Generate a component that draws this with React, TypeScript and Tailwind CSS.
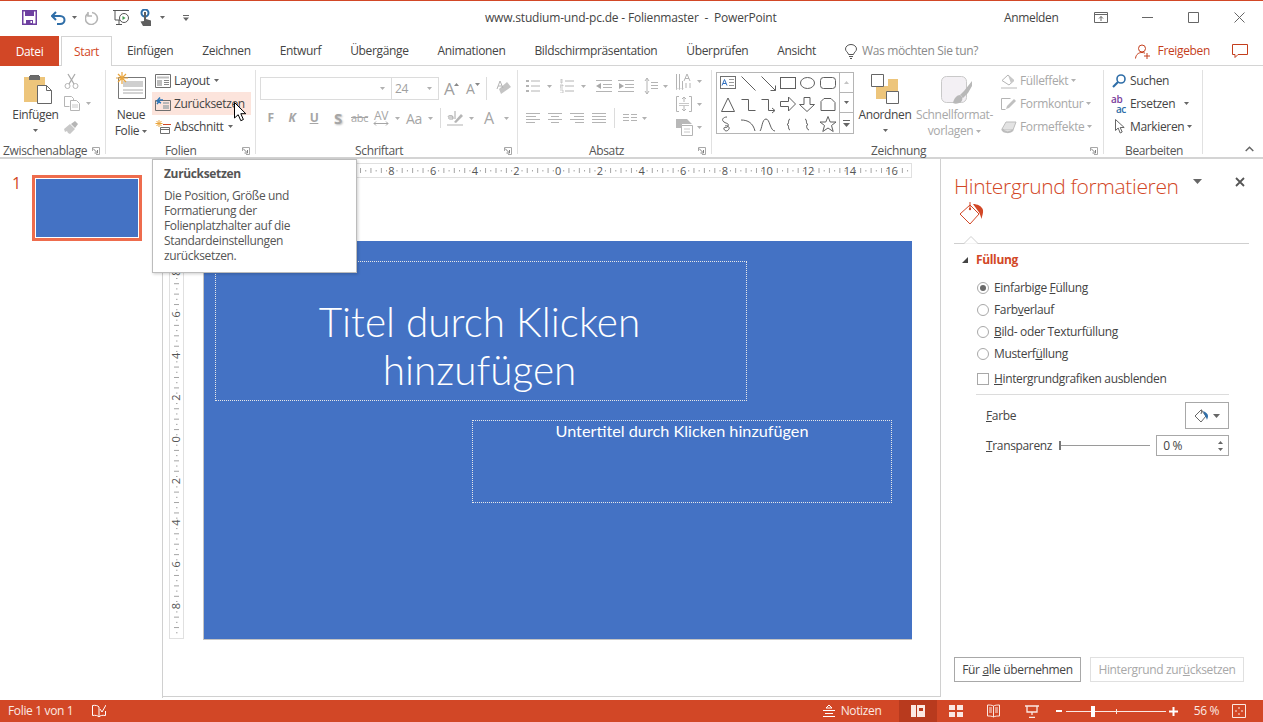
import type { ReactNode } from "react";

const DIS = "#b1b1b1";

function Caret({ c = "#666666", className = "" }: { c?: string; className?: string }) {
  return (
    <svg width="5" height="3" viewBox="0 0 5 3" className={"shrink-0 " + className}>
      <path d="M0 0h5L2.5 3z" fill={c} />
    </svg>
  );
}

function Launcher() {
  return (
    <svg width="8" height="8" viewBox="0 0 8 8" fill="none" className="shrink-0">
      <path d="M.5 4V.5H7.5V7.5H4" stroke="#a8a8a8" />
      <path d="M1 1.5 4.5 5M5.5 3v3h-3" stroke="#808080" />
    </svg>
  );
}

function GroupLabel({ pl, children }: { pl: string; children: ReactNode }) {
  return (
    <div className="flex h-[14px] items-center pr-[5px] text-[12px] text-[#555555]">
      <span className={pl}>{children}</span>
      <span className="ml-auto">
        <Launcher />
      </span>
    </div>
  );
}

function Lines({ w, ys, c = "#b4b4b4", inset = [] }: { w: number; ys: number[]; c?: string; inset?: number[][] }) {
  return (
    <svg width={w} height="14" viewBox={`0 0 ${w} 14`} className="shrink-0">
      {ys.map((y, i) => {
        const [a, b] = inset[i] ?? [0, w];
        return <rect key={y} x={a} y={y} width={b - a} height="1" fill={c} />;
      })}
    </svg>
  );
}

function ShapeGallery() {
  return (
    <svg width="122" height="61" viewBox="0 0 122 61" fill="none" stroke="#5f5f5f" className="shrink-0">
      <rect x="3.5" y="3.5" width="15" height="12" stroke="#707070" />
      <path d="m5 12.500 2.500-6 2.500 6M6 10.500h3" stroke="#2f6fc0" />
      <path d="M12 6.500h5M12 9.500h5M12 12.500h5" stroke="#999999" />
      <path d="M24.5 3.5 38.5 17.5" />
      <path d="M44.5 3.5 58.5 17.5M58.5 12.5v5h-5" />
      <rect x="63.5" y="4.5" width="15" height="11" />
      <ellipse cx="90.5" cy="10" rx="7" ry="5.5" />
      <rect x="103.5" y="4.5" width="15" height="11" rx="3" />
      <path d="M4.5 38.5 11 25l6.5 13.5z" />
      <path d="M24.5 26.5h7v11h7" />
      <path d="M44.5 26.5h7v11h6M55 35l3 2.500-3 2.500" />
      <path d="M63.500 28.500h8v-4.500l7 7-7 7v-4.500h-8z" />
      <path d="M87 24.500h6v7h4.500l-7.500 7-7.500-7H87z" />
      <path d="M107 25.500h7l4 4v8h-14v-9z" />
      <path d="M10 44c-4 0-6 3-3 5s5 1 4 4-5 0-4 3 4 2 5 0-2-4-4-3" />
      <path d="M24 47c7 0 12 3 14 11" />
      <path d="M43 58c2-2 2-12 6-12s4 12 9 12" />
      <path d="M73 46c-2 0-1 4-2 5l-1 .5 1 .5c1 1 0 5 2 5" />
      <path d="M88 46c2 0 1 4 2 5l1 .5-1 .500c-1 1 0 5 2 5" />
      <path d="m111 43.500 2.200 5.500h5.800l-4.500 3.500 1.700 6-5.200-3.500-5.200 3.500 1.700-6-4.500-3.500h5.800z" />
    </svg>
  );
}

function HRuler() {
  const marks = Array.from({ length: 143 }, (_, i) => i - 71);
  return (
    <svg width="742" height="15" viewBox="0 0 742 15" className="block shrink-0">
      <rect x=".5" y=".5" width="741" height="14" fill="#ffffff" stroke="#e0e0e0" />
      {marks.map((m) => {
        const x = 388 + m * 5.21;
        if (m % 8 === 0) {
          // labels further left sit behind the tooltip
          if (m < -32) return null;
          return (
            <text key={m} x={x} y="11.500" textAnchor="middle" fontSize="11" fill="#555555" fontFamily="Open Sans, sans-serif">
              {Math.abs(m / 4)}
            </text>
          );
        }
        return m % 2 === 0 ? (
          <rect key={m} x={x} y="5" width="1" height="5" fill="#a5a5a5" />
        ) : (
          <rect key={m} x={x} y="7" width="1" height="1.500" fill="#a5a5a5" />
        );
      })}
    </svg>
  );
}

function VRuler() {
  const marks = Array.from({ length: 76 }, (_, i) => i - 38);
  return (
    <svg width="15" height="398" viewBox="0 0 15 398" className="-ml-[1px] block shrink-0">
      <rect x=".5" y=".5" width="14" height="397" fill="#ffffff" stroke="#e0e0e0" />
      {marks.map((m) => {
        const y = 198.500 + m * 5.21;
        if (m % 8 === 0) {
          return (
            <text
              key={m}
              x="0"
              y="0"
              transform={`translate(11 ${y}) rotate(-90)`}
              textAnchor="middle"
              fontSize="11"
              fill="#555555"
              fontFamily="Open Sans, sans-serif"
            >
              {Math.abs(m / 4)}
            </text>
          );
        }
        return m % 2 === 0 ? (
          <rect key={m} x="5" y={y} width="5" height="1" fill="#a5a5a5" />
        ) : (
          <rect key={m} x="7" y={y} width="1.500" height="1" fill="#a5a5a5" />
        );
      })}
    </svg>
  );
}

function TitleBar() {
  return (
    <div className="flex h-[35px] items-center pb-[2px] text-[12px] text-[#444444]">
      <div className="flex w-[400px] items-center pl-[22px]">
        <svg width="15" height="15" viewBox="0 0 15 15" fill="none">
          <path d="M.75.75h13.500v13.500H.75z" stroke="#6d3fa0" strokeWidth="1.500" />
          <path d="M3 1h9v5H3zM4 10h7v4H4z" fill="#6d3fa0" />
          <path d="M8.500 11h1.500v2H8.500z" fill="#ffffff" />
        </svg>
        <svg width="16" height="14" viewBox="0 0 16 14" fill="none" className="ml-[14px]">
          <path d="M5 1 1 5l4 4" stroke="#2f6ea8" strokeWidth="2" />
          <path d="M2 5h7c6 0 6 8 0 8H6" stroke="#2f6ea8" strokeWidth="2" />
        </svg>
        <Caret className="ml-[5px]" />
        <svg width="14" height="14" viewBox="0 0 14 14" fill="none" className="ml-[8px]">
          <path d="M3 2.500a6 6 0 1 0 4-1M3 1v4h4" stroke="#b5b5b5" strokeWidth="1.600" />
        </svg>
        <svg width="17" height="17" viewBox="0 0 17 17" fill="none" className="ml-[14px]">
          <path d="M0 1.500h16M2 2v9h5" stroke="#555555" />
          <path d="M6 11v4M3 15.500h6" stroke="#555555" />
          <circle cx="11" cy="9" r="4.500" stroke="#555555" />
          <path d="M9.500 7v4l3-2z" fill="#3f9c4f" />
        </svg>
        <svg width="13" height="18" viewBox="0 0 13 18" fill="none" className="ml-[10px]">
          <circle cx="5" cy="4" r="3.500" stroke="#2f6ea8" strokeWidth="2" />
          <path d="M4 3h2v7l5 1.500V17H3L.5 12.500 4 12z" fill="#5f5f5f" />
        </svg>
        <Caret className="ml-[7px]" />
        <svg width="6" height="6" viewBox="0 0 6 6" className="ml-[18px]">
          <path d="M0 0h6v1H0zM0 2.500h6L3 6z" fill="#666666" />
        </svg>
      </div>
      <div className="w-[604px] whitespace-pre pl-[85px] tracking-[-0.19px] text-[#444444]">www.studium-und-pc.de - Folienmaster  -  PowerPoint</div>
      <div className="flex flex-1 items-center">
        <span>Anmelden</span>
        <svg width="14" height="11" viewBox="0 0 14 11" fill="none" className="ml-[36px]">
          <path d="M.5.500h13v10H.5zM.5 2.500h13M7 9V4.500M5 6.500l2-2 2 2" stroke="#666666" />
        </svg>
        <svg width="11" height="1" viewBox="0 0 11 1" className="ml-[34px]">
          <path d="M0 0h11v1H0z" fill="#666666" />
        </svg>
        <svg width="11" height="11" viewBox="0 0 11 11" fill="none" className="ml-[35px]">
          <path d="M.5.500h10v10H.5z" stroke="#666666" />
        </svg>
        <svg width="11" height="11" viewBox="0 0 11 11" fill="none" className="ml-[35px]">
          <path d="m.5.500 10 10M10.500.500l-10 10" stroke="#666666" />
        </svg>
      </div>
    </div>
  );
}

function Tabs() {
  const tabs = ["Einfügen", "Zeichnen", "Entwurf", "Übergänge", "Animationen", "Bildschirmpräsentation", "Überprüfen", "Ansicht"];
  return (
    <div className="flex h-[30px] items-stretch border-b border-[#d4d4d4] text-[12px] text-[#444444]">
      <div className="mb-[-1px] flex w-[59px] items-center justify-center bg-[#d24726] pt-[1px] text-white">Datei</div>
      <div className="relative ml-[2px] mb-[-1px] flex w-[51px] items-center justify-center border-x border-t border-[#d4d4d4] bg-white pt-[1px] text-[#d24726]">Start</div>
      <div className="flex items-center gap-[29px] pl-[15px] pt-[1px]">
        {tabs.map((t) => (
          <span key={t}>{t}</span>
        ))}
      </div>
      <div className="ml-[29px] flex items-center pt-[1px]">
        <svg width="12" height="15" viewBox="0 0 12 15" fill="none">
          <path d="M3.500 10.500C3 8 .5 7.500.5 5a5.500 4.500 0 0 1 11 0c0 2.500-2.500 3-3 5.500zM4 12.500h4M5 14.500h2" stroke="#555555" />
        </svg>
        <span className="ml-[5px] text-[#8a8a8a]">Was möchten Sie tun?</span>
      </div>
      <div className="ml-auto flex items-center pr-[15px] pt-[1px] text-[#c43e1c]">
        <svg width="16" height="15" viewBox="0 0 16 15" fill="none">
          <circle cx="7" cy="4.500" r="3.500" stroke="#c43e1c" />
          <path d="M.5 14.500C1 10 4 8.500 7 8.500c1 0 2 .2 3 .7M12 9v6M9 12h6" stroke="#c43e1c" />
        </svg>
        <span className="ml-[7px]">Freigeben</span>
        <svg width="16" height="14" viewBox="0 0 16 14" fill="none" className="ml-[22px]">
          <path d="M.5.500h15v10H6l-3 3v-3H.5z" stroke="#c43e1c" />
        </svg>
      </div>
    </div>
  );
}

function ClipboardGroup() {
  return (
    <div className="h-[84px] w-[106px] shrink-0 border-r border-[#e1e1e1]">
      <div className="flex h-[70px]">
        <div className="flex w-[62px] flex-col items-center pl-[9px]">
          <svg width="30" height="30" viewBox="0 0 30 30" fill="none" className="mt-[4px] ml-[4px]">
            <path d="M1 3h21v25H1z" fill="#edc57b" />
            <path d="M7 3h9V1h-9z" fill="#666666" />
            <path d="M6 2h11v4H6z" fill="#6b6b6b" />
            <path d="M14.500 11.500h9l5 5v13h-14z" fill="#ffffff" stroke="#666666" />
            <path d="M23.500 11.500v5h5" stroke="#666666" />
          </svg>
          <span className="mt-[3px] text-[12px] leading-[16px] text-[#444444]">Einfügen</span>
          <Caret className="mt-[6px]" />
        </div>
        <div className="ml-[2px] -mt-[1px] flex flex-col">
          <div className="flex h-[23px] items-center">
            <svg width="15" height="16" viewBox="0 0 15 16" fill="none">
              <path d="m4 1 6 10M11 1 5 11" stroke="#ababab" strokeWidth="1.300" />
              <circle cx="3.500" cy="13" r="2.500" stroke="#b5b5b5" />
              <circle cx="11.500" cy="13" r="2.500" stroke="#b5b5b5" />
            </svg>
          </div>
          <div className="flex h-[23px] items-center">
            <svg width="16" height="15" viewBox="0 0 16 15" fill="none">
              <path d="M.5.500h7l2 2v2M.5.500v10h5M6.500 4.500h6l3 3v7h-9z" stroke="#b5b5b5" />
              <path d="M8 9h6M8 11h6" stroke="#c8c8c8" />
            </svg>
            <Caret c={DIS} className="ml-[6px]" />
          </div>
          <div className="flex h-[23px] items-center">
            <svg width="15" height="14" viewBox="0 0 15 14" fill="none">
              <path d="M0 9 6 4l5 5-5 5-2-1-1-2-2 1z" fill="#c8c8c8" />
              <path d="m7 4 4-3 3 3-3 4z" fill="#b5b5b5" />
            </svg>
          </div>
        </div>
      </div>
      <div className="h-[4px]" />
      <GroupLabel pl="pl-[3px]">Zwischenablage</GroupLabel>
    </div>
  );
}

function SlidesGroup() {
  return (
    <div className="h-[84px] w-[150px] shrink-0 border-r border-[#e1e1e1]">
      <div className="flex h-[70px]">
        <div className="flex w-[46px] flex-col items-center pl-[4px] text-[12px] leading-[16px] text-[#444444]">
          <svg width="31" height="28" viewBox="0 0 31 28" fill="none" className="mt-[2px]">
            <path d="M2.500 5.500h27v21h-27z" fill="#ffffff" stroke="#777777" />
            <path d="M7 9h20v6H7z" fill="#cfcfcf" />
            <path d="M7 18h20M7 21h20" stroke="#a8a8a8" />
            <path d="M6 0v12M0 6h12M2 2l8 8M10 2l-8 8" stroke="#eaa53c" strokeWidth="1.200" />
          </svg>
          <span className="mt-[7px]">Neue</span>
          <span className="flex items-center gap-[3px]">
            Folie
            <Caret />
          </span>
        </div>
        <div className="-mt-[1px] flex flex-col text-[12px] text-[#444444]">
          <div className="flex h-[23px] w-[99px] items-center pl-[3px]">
            <svg width="16" height="14" viewBox="0 0 16 14" fill="none">
              <path d="M.5.500h15v13H.5z" stroke="#6f6f6f" />
              <path d="M2 2.500h12v2H2zM2 6h5v6H2z" fill="#bdbdbd" />
              <path d="M9 6.500h5M9 8.500h5M9 10.500h5" stroke="#888888" />
            </svg>
            <span className="ml-[3px]">Layout</span>
            <Caret className="ml-[4px]" />
          </div>
          <div className="flex h-[23px] w-[99px] items-center bg-[#fce4dc] pl-[3px]">
            <svg width="16" height="14" viewBox="0 0 16 14" fill="none">
              <path d="M.5 3.500h15v10H.5z" stroke="#6f6f6f" />
              <path d="M8 5h6v2H8zM8 8h6v4H8z" fill="#b8b8b8" />
              <path d="M2 7 5 3l3 0M5 .5 2 4l4 2" stroke="#3077b8" strokeWidth="1.400" />
            </svg>
            <span className="ml-[3px]">Zurücksetzen</span>
          </div>
          <div className="flex h-[23px] w-[99px] items-center pl-[3px]">
            <svg width="16" height="14" viewBox="0 0 16 14" fill="none">
              <path d="M4 0v7M.5 3.500h7M1.500 1l5 5M6.500 1l-5 5" stroke="#eaa53c" />
              <path d="M8 4.500h8" stroke="#d24726" />
              <path d="M5.500 7.500h9v6h-9z" stroke="#6f6f6f" />
              <path d="M5.500 9.500h9" stroke="#6f6f6f" />
            </svg>
            <span className="ml-[3px]">Abschnitt</span>
            <Caret className="ml-[4px]" />
          </div>
        </div>
      </div>
      <div className="h-[4px]" />
      <GroupLabel pl="pl-[59px]">Folien</GroupLabel>
    </div>
  );
}

function Sep({ h }: { h: string }) {
  return <div className={"w-px shrink-0 bg-[#dcdcdc] " + h} />;
}

function FontGroup() {
  const b = "text-center text-[12px] font-bold text-[#a6a6a6] ";
  return (
    <div className="h-[84px] w-[262px] shrink-0 border-r border-[#e1e1e1]">
      <div className="h-[70px] pl-[4px]">
        <div className="flex h-[38px] items-start pt-[7px]">
          <div className="flex h-[23px] w-[132px] items-center justify-end border border-[#dcdcdc] pr-[6px]">
            <Caret c={DIS} />
          </div>
          <div className="flex h-[23px] w-[47px] items-center justify-between border border-l-0 border-[#dcdcdc] pl-[3px] pr-[6px] text-[12px] text-[#a0a0a0]">
            24
            <Caret c={DIS} />
          </div>
          <div className="ml-[5px] flex h-[23px] w-[21px] items-center text-[17px] text-[#a0a0a0]">
            A
            <svg width="5" height="3" viewBox="0 0 5 3" className="mb-[9px]">
              <path d="M0 3h5L2.500 0z" fill="#888888" />
            </svg>
          </div>
          <div className="ml-[1px] flex h-[23px] w-[20px] items-center text-[14px] text-[#a0a0a0]">
            A
            <svg width="5" height="3" viewBox="0 0 5 3" className="mb-[9px]">
              <path d="M0 0h5L2.500 3z" fill="#888888" />
            </svg>
          </div>
          <Sep h="h-[23px]" />
          <svg width="15" height="16" viewBox="0 0 15 16" fill="none" className="ml-[9px] mt-[3px]">
            <path d="m5 14 10-7-4-5L3 9z" fill="#c4c4c4" />
            <path d="M1 9 4 1l3 7M2 6h4" stroke="#b4b4b4" />
          </svg>
        </div>
        <div className="flex h-[20px] items-center">
          <span className={b + "w-[21px]"}>F</span>
          <span className={b + "w-[22px] italic"}>K</span>
          <span className={b + "w-[22px] underline"}>U</span>
          <span className={b + "w-[26px] text-[15px] [text-shadow:1px_1px_2px_#bbbbbb]"}>S</span>
          <span className="w-[16px] text-center text-[11px] text-[#a6a6a6] line-through">abc</span>
          <span className="flex w-[28px] flex-col items-center text-[12px] leading-[11px] text-[#a6a6a6]">
            AV
            <svg width="16" height="5" viewBox="0 0 16 5" fill="none">
              <path d="M1 2.500h14M3 .5l-2 2 2 2M13 .5l2 2-2 2" stroke="#a6a6a6" />
            </svg>
          </span>
          <Caret c={DIS} />
          <span className="w-[28px] text-center text-[14px] text-[#a6a6a6]">Aa</span>
          <Caret c={DIS} />
          <div className="ml-[7px]">
            <Sep h="h-[20px]" />
          </div>
          <span className="flex w-[28px] flex-col items-center">
            <svg width="16" height="16" viewBox="0 0 16 16" fill="none">
              <path d="M0 14h16v2H0z" fill="#d8d8d8" />
              <path d="m7 12 7-8 2 2-7 7z" fill="#b5b5b5" />
              <path d="M1 7c0-2 5-2 5 0v2H3c-2 0-2-2 0-2h3M8 1v8" stroke="#a6a6a6" />
            </svg>
          </span>
          <Caret c={DIS} />
          <span className="w-[30px] text-center text-[16px] text-[#a6a6a6]">A</span>
          <Caret c={DIS} />
        </div>
      </div>
      <div className="h-[4px]" />
      <GroupLabel pl="pl-[99px]">Schriftart</GroupLabel>
    </div>
  );
}

function ParagraphGroup() {
  const left = [[0, 14], [0, 10], [0, 14], [0, 9]];
  const center = [[0, 14], [3, 11], [0, 14], [3, 11]];
  const right = [[0, 14], [4, 14], [0, 14], [5, 14]];
  const full = [[0, 14], [0, 14], [0, 14], [0, 14]];
  const ys = [2, 5, 8, 11];
  return (
    <div className="h-[84px] w-[194px] shrink-0 border-r border-[#e1e1e1]">
      <div className="flex h-[70px]">
        <div className="w-[158px] pl-[8px]">
          <div className="mt-[6px] flex h-[20px] items-center">
            <svg width="14" height="14" viewBox="0 0 14 14" fill="none" className="shrink-0">
              <path d="M0 1h3v2H0zM0 6h3v2H0zM0 11h3v2H0z" fill="#b4b4b4" />
              <path d="M5 2h9M5 7h9M5 12h9" stroke="#b4b4b4" />
            </svg>
            <Caret c={DIS} className="ml-[7px]" />
            <svg width="14" height="14" viewBox="0 0 14 14" fill="none" className="ml-[8px] shrink-0">
              <path d="M1 0h1v4H1zM0 6h3v1H0v2h3M0 11h3v3H0" stroke="#b4b4b4" strokeWidth=".7" />
              <path d="M5 2h9M5 7h9M5 12h9" stroke="#b4b4b4" />
            </svg>
            <Caret c={DIS} className="ml-[7px]" />
            <svg width="16" height="14" viewBox="0 0 16 14" fill="none" className="ml-[10px] shrink-0">
              <path d="M0 1.500h16M7 5.500h9M7 8.500h9M0 12.500h16" stroke="#b4b4b4" />
              <path d="M5 4v6L0 7z" fill="#a8a8a8" />
            </svg>
            <svg width="16" height="14" viewBox="0 0 16 14" fill="none" className="ml-[6px] shrink-0">
              <path d="M0 1.500h16M7 5.500h9M7 8.500h9M0 12.500h16" stroke="#b4b4b4" />
              <path d="M1 4v6l5-3z" fill="#a8a8a8" />
            </svg>
            <svg width="14" height="18" viewBox="0 0 14 18" fill="none" className="ml-[10px] shrink-0">
              <path d="M3 1v16M1 4l2-3 2 3M1 14l2 3 2-3" stroke="#b4b4b4" />
              <path d="M7 5.500h7M7 8.500h7M7 11.500h7" stroke="#b4b4b4" />
            </svg>
            <Caret c={DIS} className="ml-[5px]" />
          </div>
          <div className="mt-[12px] flex h-[20px] items-center">
            <Lines w={14} ys={ys} inset={left} />
            <div className="ml-[8px]">
              <Lines w={14} ys={ys} inset={center} />
            </div>
            <div className="ml-[8px]">
              <Lines w={14} ys={ys} inset={right} />
            </div>
            <div className="ml-[8px]">
              <Lines w={14} ys={ys} inset={full} />
            </div>
            <div className="ml-[8px]">
              <Sep h="h-[20px]" />
            </div>
            <svg width="14" height="14" viewBox="0 0 14 14" fill="none" className="ml-[8px] shrink-0">
              <path d="M0 3.500h6M0 6.500h6M0 9.500h6M8 3.500h6M8 6.500h6M8 9.500h6" stroke="#b4b4b4" />
            </svg>
            <Caret c={DIS} className="ml-[5px]" />
          </div>
        </div>
        <div className="-mt-[1px] flex flex-col">
          <div className="flex h-[23px] items-center pt-[1px]">
            <svg width="16" height="17" viewBox="0 0 16 17" fill="none">
              <path d="M.5 1v14M3.500 1v14M6.500 8v7M1 15l-.5 1.500L0 15M4 15l-.5 1.500L3 15M7 15l-.5 1.500L6 15" stroke="#b4b4b4" />
              <path d="M8 8l3-7 3 7M9 5.500h4" stroke="#b4b4b4" />
              <path d="M10 10v5M14 10v5" stroke="#b4b4b4" />
            </svg>
            <Caret c={DIS} className="ml-[5px]" />
          </div>
          <div className="flex h-[23px] items-center pt-[1px]">
            <svg width="16" height="16" viewBox="0 0 16 16" fill="none">
              <path d="M3 .5H.5v15H3M13 .5h2.500v15H13M8 1v5M6 3l2-2 2 2M8 15v-5M6 13l2 2 2-2" stroke="#b4b4b4" />
              <path d="M3 7.500h10M3 9.500h10" stroke="#c8c8c8" />
            </svg>
            <Caret c={DIS} className="ml-[5px]" />
          </div>
          <div className="flex h-[23px] items-center pt-[2px]">
            <svg width="17" height="17" viewBox="0 0 17 17" fill="none">
              <path d="M0 0h11l5 5H6v4H0z" fill="#b8b8b8" />
              <path d="M5.500 6.500h11v10h-11z" fill="#ffffff" stroke="#b4b4b4" />
              <path d="M8 10h6M8 13h6" stroke="#c8c8c8" />
            </svg>
            <Caret c={DIS} className="ml-[4px]" />
          </div>
        </div>
      </div>
      <div className="h-[4px]" />
      <div className="flex h-[14px] items-center pr-[5px] text-[12px] text-[#555555]">
        <span className="pl-[71px]">Absatz</span>
        <span className="ml-auto">
          <Launcher />
        </span>
      </div>
    </div>
  );
}

function ScrollCell({ children, last = false }: { children: ReactNode; last?: boolean }) {
  return <div className={"flex h-[20px] items-center justify-center border-[#b5b5b5] " + (last ? "" : "border-b")}>{children}</div>;
}

function DrawingGroup() {
  const row = "flex h-[23px] items-center";
  return (
    <div className="h-[84px] w-[392px] shrink-0 border-r border-[#e1e1e1]">
      <div className="flex h-[70px] text-[12px]">
        <div className="ml-[4px] mt-[2px] flex h-[62px] border border-[#b5b5b5]">
          <ShapeGallery />
          <div className="flex w-[14px] flex-col border-l border-[#b5b5b5]">
            <ScrollCell>
              <svg width="5" height="3" viewBox="0 0 5 3">
                <path d="M0 3h5L2.500 0z" fill="#c4c4c4" />
              </svg>
            </ScrollCell>
            <ScrollCell>
              <Caret />
            </ScrollCell>
            <ScrollCell last>
              <svg width="7" height="7" viewBox="0 0 7 7">
                <path d="M0 0h7v1H0zM0 3h7L3.500 7z" fill="#666666" />
              </svg>
            </ScrollCell>
          </div>
        </div>
        <div className="ml-[4px] flex w-[54px] flex-col items-center text-[#444444]">
          <svg width="28" height="30" viewBox="0 0 28 30" fill="none" className="mt-[4px]">
            <path d="M5 12h12V5h10v12H17v8H5z" fill="#edc57b" />
            <path d="M.5.500h12v12H.5z" fill="#ffffff" stroke="#666666" />
            <path d="M15.500 17.500h12v12h-12z" fill="#ffffff" stroke="#666666" />
          </svg>
          <span className="mt-[3px] leading-[16px]">Anordnen</span>
          <Caret className="mt-[6px]" />
        </div>
        <div className="ml-[2px] flex w-[81px] flex-col items-center leading-[16px] text-[#a8a8a8]">
          <svg width="31" height="30" viewBox="0 0 31 30" fill="none" className="ml-[3px] mt-[5px]">
            <rect x=".5" y="1.500" width="25" height="26" rx="5" fill="#f3f0f4" stroke="#c9c9c9" />
            <path d="m31 6-8 10-4 4 3 3 5-5 4-7zM12 28c1-5 4-8 7-8 3 1 3 5 1 7-3 2-6 2-8 1z" fill="#b8b8b8" />
          </svg>
          <span className="mt-[2px] whitespace-nowrap">Schnellformat-</span>
          <span className="flex items-center gap-[3px]">
            vorlagen
            <Caret c={DIS} />
          </span>
        </div>
        <div className="ml-[6px] -mt-[1px] flex flex-col text-[#a8a8a8]">
          <div className={row}>
            <svg width="16" height="16" viewBox="0 0 16 16" fill="none">
              <path d="M1 7.500 7 2l6 5.500L8 12z" stroke="#b4b4b4" />
              <path d="m7 2 6 5.500-3 3z" fill="#c8c8c8" />
              <path d="M0 14h16v2H0z" fill="#dcdcdc" />
            </svg>
            <span className="ml-[3px]">Fülleffekt</span>
            <Caret c={DIS} className="ml-[3px]" />
          </div>
          <div className={row}>
            <svg width="16" height="14" viewBox="0 0 16 14" fill="none">
              <path d="M.5 1.500h9M.5 1.500v11h4" stroke="#b4b4b4" />
              <path d="m5 12 1-3 7-7 2 2-7 7z" fill="#c0c0c0" />
            </svg>
            <span className="ml-[3px]">Formkontur</span>
            <Caret c={DIS} className="ml-[3px]" />
          </div>
          <div className={row}>
            <svg width="16" height="14" viewBox="0 0 16 14" fill="none">
              <path d="M1 9 5 2h10l-3 8H3z" fill="#e3e3e3" stroke="#bdbdbd" />
              <path d="M1 9c2 4 8 4 11 1" stroke="#bdbdbd" strokeWidth="2" />
            </svg>
            <span className="ml-[3px]">Formeffekte</span>
            <Caret c={DIS} className="ml-[3px]" />
          </div>
        </div>
      </div>
      <div className="h-[4px]" />
      <GroupLabel pl="pl-[159px]">Zeichnung</GroupLabel>
    </div>
  );
}

function EditGroup() {
  const row = "flex h-[23px] items-center";
  return (
    <div className="h-[84px] w-[99px] shrink-0 border-r border-[#e1e1e1]">
      <div className="-mt-[1px] h-[71px] text-[12px] text-[#444444]">
        <div className={row + " pl-[8px]"}>
          <svg width="14" height="14" viewBox="0 0 14 14" fill="none">
            <circle cx="9" cy="5" r="4" stroke="#2f6ea8" strokeWidth="1.600" />
            <path d="m6 8-5 5" stroke="#2f6ea8" strokeWidth="2.200" />
          </svg>
          <span className="ml-[4px]">Suchen</span>
        </div>
        <div className={row + " pl-[7px]"}>
          <span className="flex w-[15px] flex-col text-[10px] font-semibold leading-[10px]">
            <span className="text-[#7a3e9d]">ab</span>
            <span className="text-right text-[#2f6ea8]">ac</span>
          </span>
          <span className="ml-[4px]">Ersetzen</span>
          <Caret className="ml-[9px]" />
        </div>
        <div className={row + " pl-[11px]"}>
          <svg width="11" height="15" viewBox="0 0 11 15" fill="none">
            <path d="M.5.500v11l2.700-2.500 2 5 2-1-2-4.500h4z" fill="#ffffff" stroke="#666666" />
          </svg>
          <span className="ml-[4px]">Markieren</span>
          <Caret className="ml-[3px]" />
        </div>
      </div>
      <div className="h-[4px]" />
      <div className="flex h-[14px] items-center text-[12px] text-[#555555]">
        <span className="pl-[21px]">Bearbeiten</span>
      </div>
    </div>
  );
}

function Ribbon() {
  return (
    <div className="flex h-[93px] shrink-0 border-b-2 border-[#d4d4d4] pt-[4px]">
      <ClipboardGroup />
      <SlidesGroup />
      <FontGroup />
      <ParagraphGroup />
      <DrawingGroup />
      <EditGroup />
      <div className="flex flex-1 items-end justify-end pb-[3px] pr-[9px]">
        <svg width="9" height="6" viewBox="0 0 9 6" fill="none" className="mb-[2px]">
          <path d="m.7 5 3.800-3.800L8.300 5" stroke="#666666" strokeWidth="1.500" />
        </svg>
      </div>
    </div>
  );
}

function Radio({ on = false, children }: { on?: boolean; children: ReactNode }) {
  return (
    <div className="flex h-[22px] items-center">
      <span className="flex h-[12px] w-[12px] items-center justify-center rounded-full border border-[#a8a8a8]">
        {on && <span className="h-[6px] w-[6px] rounded-full bg-[#6a6a6a]" />}
      </span>
      <span className="ml-[5px]">{children}</span>
    </div>
  );
}

function FormatPane() {
  return (
    <aside className="flex h-full w-[322px] shrink-0 flex-col pl-[13px] pr-[14px] text-[12px] text-[#444444]">
      <div className="flex h-[42px] items-end">
        <span className="text-[21px] font-light leading-[30px] text-[#d24726]">Hintergrund formatieren</span>
        <svg width="9" height="5" viewBox="0 0 9 5" className="mb-[17px] ml-[14px]">
          <path d="M0 0h9L4.500 5z" fill="#666666" />
        </svg>
        <svg width="10" height="10" viewBox="0 0 10 10" fill="none" className="mb-[14px] ml-[33px]">
          <path d="m1 1 8 8M9 1 1 9" stroke="#555555" strokeWidth="1.800" />
        </svg>
      </div>
      <svg width="27" height="23" viewBox="0 0 27 23" fill="none" className="mt-[1px] ml-[5px] shrink-0">
        <path d="M1 12 11 3l9 9-9 10z" stroke="#d24726" />
        <path d="M11 0v6" stroke="#d24726" />
        <circle cx="11" cy="7" r="1.200" fill="#d24726" />
        <path d="M14 2c4 0 9 2 10 6 .5 3-1 6-1.500 9-1-3-1.500-6-3.500-8z" fill="#d24726" />
      </svg>
      <div className="relative mt-[18px] h-px w-[295px] shrink-0 bg-[#cfcfcf]">
        <svg width="14" height="8" viewBox="0 0 14 8" fill="none" className="absolute left-[10px] top-[-7px]">
          <path d="M0 7.500 7 .5l7 7" fill="#ffffff" stroke="#cfcfcf" />
          <path d="M1 8h12" stroke="#ffffff" />
        </svg>
      </div>
      <div className="mt-[8px] flex h-[16px] items-center pl-[8px]">
        <svg width="6" height="6" viewBox="0 0 6 6">
          <path d="M6 0v6H0z" fill="#444444" />
        </svg>
        <span className="ml-[8px] font-bold text-[#d24726]">Füllung</span>
      </div>
      <div className="mt-[9px] pl-[23px]">
        <Radio on>
          Einfarbige <u>F</u>üllung
        </Radio>
        <Radio>
          Farb<u>v</u>erlauf
        </Radio>
        <Radio>
          <u>B</u>ild- oder Texturfüllung
        </Radio>
        <Radio>
          Musterf<u>ü</u>llung
        </Radio>
      </div>
      <div className="mt-[4px] flex h-[20px] items-center pl-[23px]">
        <span className="h-[12px] w-[12px] border border-[#a8a8a8]" />
        <span className="ml-[5px]">
          <u>H</u>intergrundgrafiken ausblenden
        </span>
      </div>
      <div className="ml-[22px] mt-[5px] h-px w-[253px] shrink-0 bg-[#dcdcdc]" />
      <div className="ml-[32px] mt-[7px] flex h-[27px] w-[243px] items-center justify-between">
        <span>
          <u>F</u>arbe
        </span>
        <span className="flex h-[27px] w-[44px] items-center justify-center gap-[4px] border border-[#a8a8a8]">
          <svg width="15" height="14" viewBox="0 0 15 14" fill="none">
            <path d="M1 7 7 1l5 6-5 6z" stroke="#666666" />
            <path d="M7 1h1l-1 4" stroke="#666666" />
            <path d="M9 2c3 1 5 3 5 5 0 2-1 3-1 4-.5-2-1-3-2-4z" fill="#2f6ea8" />
          </svg>
          <svg width="7" height="4" viewBox="0 0 7 4" className="shrink-0">
            <path d="M0 0h7L3.500 4z" fill="#666666" />
          </svg>
        </span>
      </div>
      <div className="ml-[32px] mt-[6px] flex h-[21px] w-[243px] items-center">
        <span className="w-[73px]">
          <u>T</u>ransparenz
        </span>
        <span className="h-[9px] w-[2px] bg-[#777777]" />
        <span className="h-px w-[90px] bg-[#9a9a9a]" />
        <span className="ml-[6px] flex h-[21px] w-[73px] items-center justify-between border border-[#a8a8a8] pl-[6px] pr-[5px]">
          0 %
          <span className="flex flex-col gap-[4px]">
            <svg width="5" height="3" viewBox="0 0 5 3">
              <path d="M0 3h5L2.500 0z" fill="#666666" />
            </svg>
            <Caret />
          </span>
        </span>
      </div>
      <div className="mb-[18px] mt-auto flex gap-[9px]">
        <span className="flex h-[25px] w-[127px] items-center justify-center border border-[#a8a8a8]">
          <span>
            Für <u>a</u>lle übernehmen
          </span>
        </span>
        <span className="flex h-[25px] w-[154px] items-center justify-center border border-[#e0e0e0] text-[#a8a8a8]">
          <span>
            Hintergrund zur<u>ü</u>cksetzen
          </span>
        </span>
      </div>
    </aside>
  );
}

function StatusBar() {
  return (
    <div className="flex h-[22px] shrink-0 items-center bg-[#d24726] text-[12px] text-[#fbe9e3]">
      <span className="pl-[8px]">Folie 1 von 1</span>
      <svg width="14" height="14" viewBox="0 0 14 14" fill="none" className="ml-[19px]">
        <path d="M7 3C6 1.500 3 1 .5 1.500v10C3 11 6 11.500 7 13c1-1.500 3-2 6.500-1.500V7M7 3v10M8 5l2 3 4-7" stroke="#ffffff" />
      </svg>
      <div className="ml-auto flex h-full items-center">
        <svg width="12" height="12" viewBox="0 0 12 12" fill="none">
          <path d="M6 0 3 3h6zM0 5.500h12M2 8.500h8M0 11.500h12" stroke="#ffffff" />
        </svg>
        <span className="ml-[6px] w-[58px]">Notizen</span>
        <span className="flex h-full w-[38px] items-center justify-center bg-[#b83a1e]">
          <svg width="14" height="12" viewBox="0 0 14 12" fill="none">
            <path d="M0 0h5v12H0zM6 0h8v12H6z" fill="#fbe9e3" />
            <path d="M8 3h4v3H8z" fill="#b83a1e" />
          </svg>
        </span>
        <svg width="14" height="12" viewBox="0 0 14 12" className="ml-[12px]">
          <path d="M0 0h6v5H0zM8 0h6v5H8zM0 7h6v5H0zM8 7h6v5H8z" fill="#fbe9e3" />
        </svg>
        <svg width="13" height="14" viewBox="0 0 13 14" fill="none" className="ml-[24px]">
          <path d="M6.500 2C5 1 2.500 1 .5 1v11c2 0 4.500 0 6 1 1.500-1 4-1 6-1V1c-2 0-4.500 0-6 1zM6.500 2v11M2 4h3M2 6h3M2 8h3M8 4h3M8 6h3M8 8h3" stroke="#fbe9e3" />
        </svg>
        <svg width="14" height="13" viewBox="0 0 14 13" fill="none" className="ml-[25px]">
          <path d="M0 1h14M2 1v6h10V1M7 7v3M4 12.500h6" stroke="#fbe9e3" strokeWidth="1.300" />
        </svg>
        <div className="ml-[17px] flex items-center">
          <span className="h-[2px] w-[6px] bg-white" />
          <span className="relative ml-[4px] flex h-px w-[100px] items-center bg-[#fbe9e3]">
            <span className="absolute left-[25px] h-[11px] w-[4px] bg-white" />
            <span className="absolute left-[50px] h-[5px] w-px bg-[#fbe9e3]" />
          </span>
          <svg width="9" height="9" viewBox="0 0 9 9" className="ml-[3px]">
            <path d="M3.500 0h2v3.500H9v2H5.500V9h-2V5.500H0v-2h3.500z" fill="#ffffff" />
          </svg>
        </div>
        <span className="ml-[16px]">56 %</span>
        <svg width="14" height="14" viewBox="0 0 14 14" fill="none" className="ml-[13px] mr-[17px]">
          <path d="M.5.500h13v13H.5zM3 7h2M9 7h2M7 3v2M7 9v2" stroke="#fbe9e3" />
        </svg>
      </div>
    </div>
  );
}

export default function App() {
  return (
    <div className="relative flex h-[722px] w-[1263px] flex-col overflow-hidden border-t border-[#d24726] bg-white font-['Open_Sans',sans-serif] tracking-[-0.35px]">
      <TitleBar />
      <Tabs />
      <Ribbon />

      <div className="flex min-h-0 flex-1">
        {/* Thumbnail pane */}
        <div className="flex h-[539px] w-[163px] shrink-0 border-r border-[#d0d0d0] pl-[12px] pt-[16px]">
          <span className="w-[8px] text-[16px] leading-[16px] text-[#d24726]">1</span>
          <div className="ml-[12px] h-[66px] w-[110px] border-[3px] border-[#ee6c4d] bg-[#4472c4] outline outline-1 -outline-offset-4 outline-white" />
        </div>

        {/* Slide area */}
        <div className="relative flex h-[538px] w-[778px] shrink-0 flex-col border-b border-r border-[#d0d0d0] pl-[7px] pt-[4px]">
          <HRuler />
          <div className="mt-[63px] flex">
            <VRuler />
            <div className="relative ml-[19px] h-[399px] w-[709px] border-b border-l border-[#c4c4c4] bg-[#4472c4] font-['Lato',sans-serif] tracking-normal text-white">
              <div className="absolute left-[11px] top-[20px] flex h-[140px] w-[532px] items-center justify-center border border-dotted border-[#e8e8e8] pr-[3px] pt-[30px] text-center text-[40.500px] font-light leading-[48px]">
                Titel durch Klicken
                <br />
                hinzufügen
              </div>
              <div className="absolute left-[268px] top-[179px] h-[83px] w-[420px] border border-dotted border-[#e8e8e8] text-center text-[16.250px] leading-[20px]">
                Untertitel durch Klicken hinzufügen
              </div>
            </div>
          </div>
        </div>

        <FormatPane />
      </div>

      <StatusBar />

      {/* Tooltip */}
      <div className="absolute left-[152px] top-[158px] h-[114px] w-[205px] border border-[#bcbcbc] bg-white pl-[11px] pt-[6px] text-[12px] leading-[15px] text-[#555555] shadow-[1px_1px_3px_rgba(0,0,0,0.2)]">
        <div className="font-bold">Zurücksetzen</div>
        <div className="mt-[7px]">
          Die Position, Größe und
          <br />
          Formatierung der
          <br />
          Folienplatzhalter auf die
          <br />
          Standardeinstellungen
          <br />
          zurücksetzen.
        </div>
      </div>

      {/* Mouse pointer */}
      <svg width="13" height="20" viewBox="0 0 13 20" className="absolute left-[234px] top-[101px]">
        <path d="M.5.500v15.500l3.700-3.300 2.600 6 2.600-1.200-2.600-5.800h5z" fill="#ffffff" stroke="#000000" />
      </svg>
    </div>
  );
}
